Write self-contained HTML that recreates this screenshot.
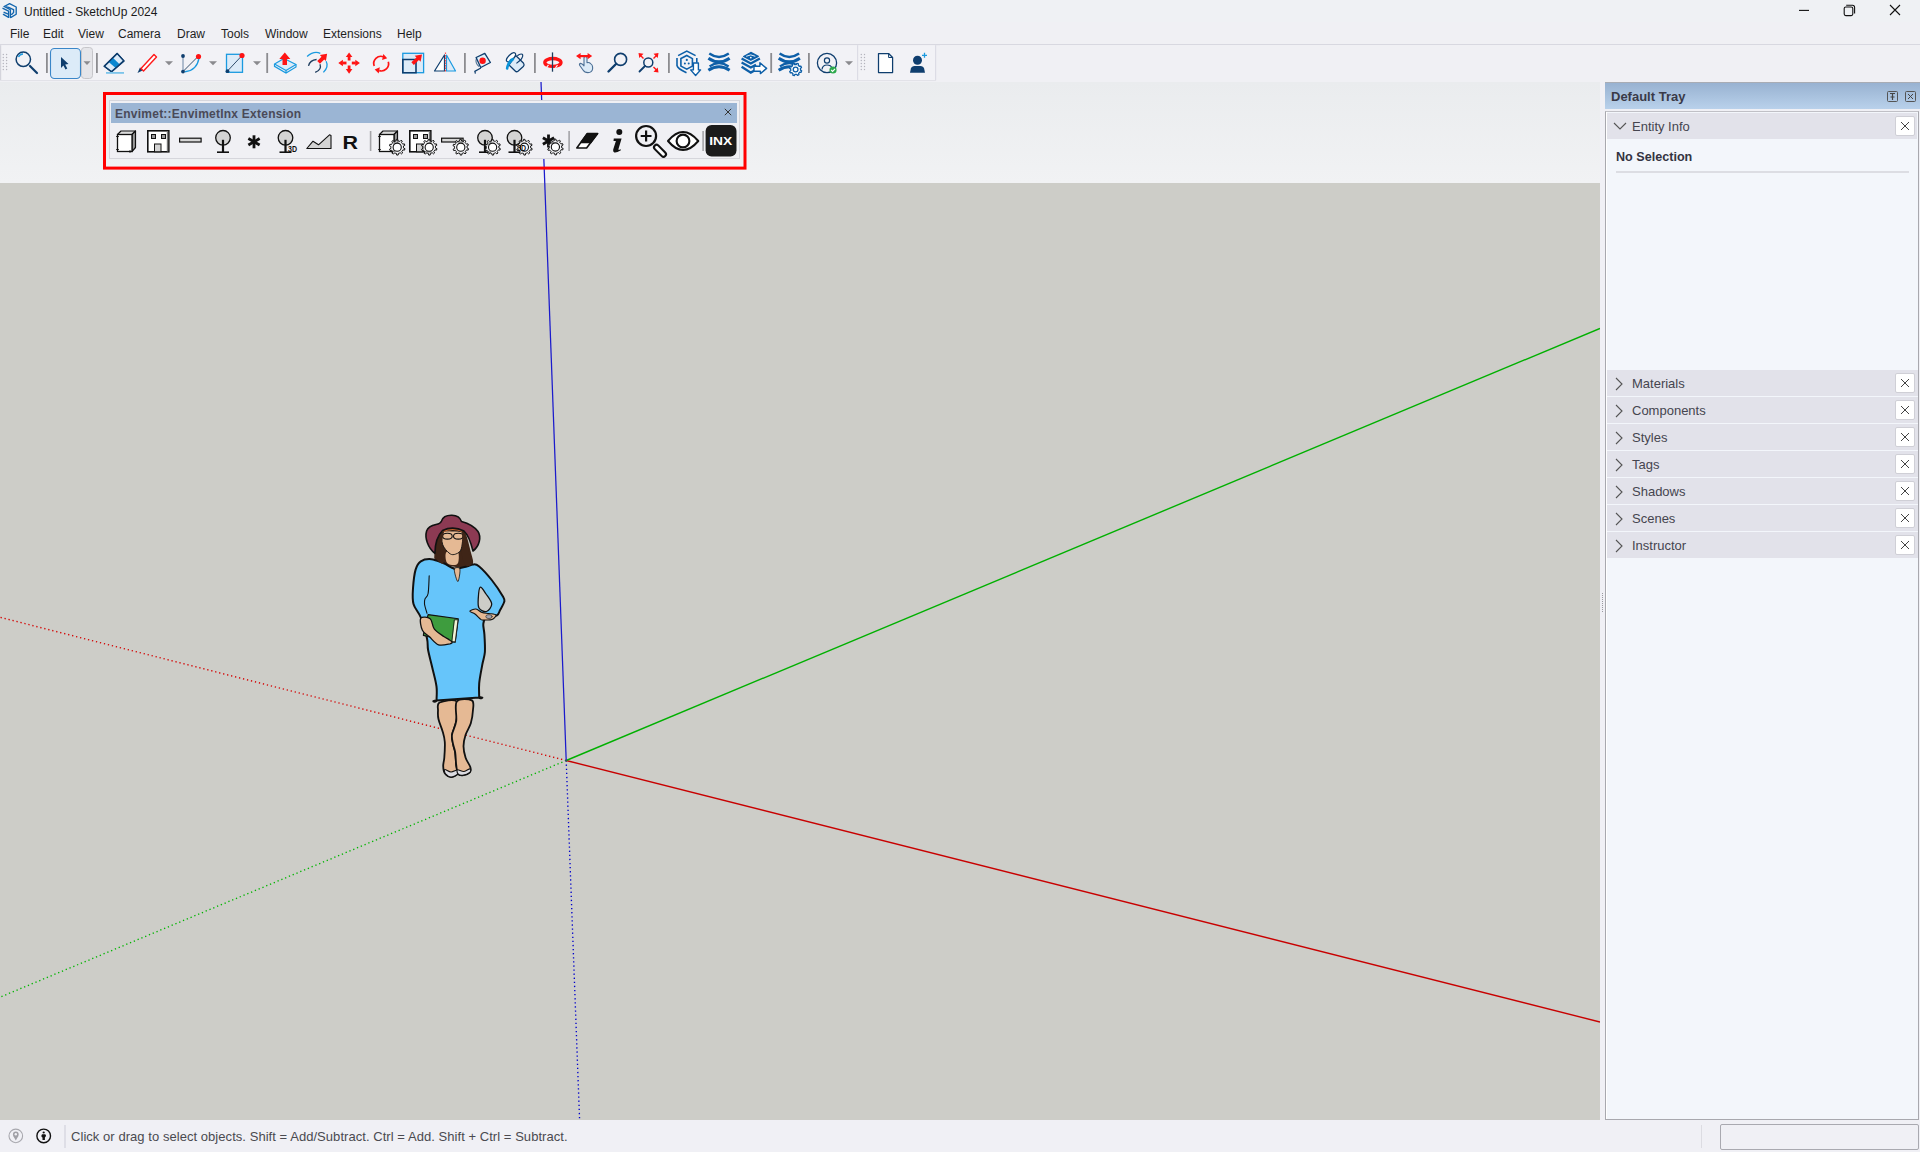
<!DOCTYPE html>
<html><head><meta charset="utf-8">
<style>
*{margin:0;padding:0;box-sizing:border-box}
html,body{width:1920px;height:1152px;overflow:hidden;background:#f0f0f5;font-family:"Liberation Sans",sans-serif}
.a{position:absolute}
#title{left:0;top:0;width:1920px;height:22px;background:#eff1f4}
#title .t{left:24px;top:5px;font-size:12px;color:#1a1a1a;letter-spacing:0px}
#menu{left:0;top:22px;width:1920px;height:23px;background:#f0f0f4;border-bottom:1px solid #d8d8e0}
#menu span{position:absolute;top:5px;font-size:12px;color:#1e1e1e}
#tb{left:0;top:45px;width:1920px;height:37px;background:#f0f0f4}
#vp{left:0;top:82px;width:1600px;height:1038px;background:#cdcdc8;overflow:hidden}
#sky{left:0;top:0;width:1600px;height:101px;background:linear-gradient(#ebedef,#f1f2f4)}
#tray{left:1600px;top:82px;width:320px;height:1038px;background:#f0f0f5}
#status{left:0;top:1120px;width:1920px;height:32px;background:#f0f0f5}
.row{position:absolute;left:1607px;width:311px;height:26px;background:#e2e2ea}
.row .lbl{position:absolute;left:25px;top:6px;font-size:13px;color:#45454f}
.row .chev{position:absolute;left:8px;top:8px}
.xb{position:absolute;width:20px;height:20px;background:#fff;border:1px solid #cfcfd6;border-radius:2px}
</style></head><body>
<div id="title" class="a">
  <svg class="a" style="left:0;top:0" width="24" height="22" viewBox="0 0 24 22"><g fill="none" stroke="#1266ae" stroke-width="1.35" stroke-linejoin="round" stroke-linecap="round"><path d="M4.2 6.5 L9.6 3.6 L16.2 7 V14.2 L11 17.4"/><path d="M6.2 6.9 L8.7 7.4 L12.9 9.3 L13.6 9.7 V12.6 L11.6 14.4"/><path d="M4.2 6.5 L9.8 9.3 L10.4 10 V17.6"/><path d="M3 8.3 L8.6 11.2 V17.4 L3.4 14.4"/><path d="M4.1 12.3 L7.6 13.9"/></g></svg>
  <div class="a t">Untitled - SketchUp 2024</div>
  <svg class="a" style="left:1797px;top:4px" width="110" height="14"><path d="M2 6.4 H12" stroke="#111" stroke-width="1.1"/><rect x="47.2" y="3" width="8.6" height="8.6" rx="1.6" fill="none" stroke="#111" stroke-width="1.1"/><path d="M49.2 1.3 H55.5 Q57.6 1.3 57.6 3.4 V9.6" fill="none" stroke="#111" stroke-width="1.1"/><path d="M93 1 L103 11 M103 1 L93 11" stroke="#111" stroke-width="1.1"/></svg>
</div>
<div id="menu" class="a">
  <span style="left:10px">File</span><span style="left:43px">Edit</span><span style="left:78px">View</span><span style="left:118px">Camera</span><span style="left:177px">Draw</span><span style="left:221px">Tools</span><span style="left:265px">Window</span><span style="left:323px">Extensions</span><span style="left:397px">Help</span>
</div>
<div id="tb" class="a"></div>
<svg class="a" style="left:0;top:44px" width="940" height="38" viewBox="0 44 940 38">
<rect x="0" y="44" width="940" height="38" fill="#f0f0f4"/>
<rect x="0" y="44" width="940" height="1.2" fill="#d8d8e0"/>
<rect x="0" y="45.2" width="857" height="35" fill="#f2f2f6"/>
<rect x="0" y="45.2" width="1.2" height="35" fill="#d4d4dc"/>
<rect x="857" y="45.2" width="1.4" height="35" fill="#dcdce5"/>
<rect x="858.4" y="45.2" width="76.6" height="35" fill="#f2f2f6"/>
<rect x="935" y="45.2" width="1.2" height="35" fill="#dcdce5"/>
<rect x="0" y="80" width="936" height="1" fill="#e2e2e8"/>
<g fill="#b4b4bc">
<circle cx="3.3" cy="54.5" r=".7"/><circle cx="6.6" cy="54.5" r=".7"/><circle cx="3.3" cy="57.5" r=".7"/><circle cx="6.6" cy="57.5" r=".7"/><circle cx="3.3" cy="60.5" r=".7"/><circle cx="6.6" cy="60.5" r=".7"/><circle cx="3.3" cy="63.5" r=".7"/><circle cx="6.6" cy="63.5" r=".7"/><circle cx="3.3" cy="66.5" r=".7"/><circle cx="6.6" cy="66.5" r=".7"/><circle cx="3.3" cy="69.5" r=".7"/><circle cx="6.6" cy="69.5" r=".7"/>
<circle cx="861.3" cy="54.5" r=".7"/><circle cx="864.5" cy="54.5" r=".7"/><circle cx="861.3" cy="57.5" r=".7"/><circle cx="864.5" cy="57.5" r=".7"/><circle cx="861.3" cy="60.5" r=".7"/><circle cx="864.5" cy="60.5" r=".7"/><circle cx="861.3" cy="63.5" r=".7"/><circle cx="864.5" cy="63.5" r=".7"/><circle cx="861.3" cy="66.5" r=".7"/><circle cx="864.5" cy="66.5" r=".7"/><circle cx="861.3" cy="69.5" r=".7"/><circle cx="864.5" cy="69.5" r=".7"/>
</g>
<g fill="#8c8c90">
<rect x="46" y="53" width="1.8" height="20"/><rect x="96" y="53" width="1.8" height="20"/><rect x="266.3" y="53" width="1.8" height="20"/><rect x="464" y="53" width="1.8" height="20"/><rect x="534" y="53" width="1.8" height="20"/><rect x="668" y="53" width="1.8" height="20"/><rect x="770.3" y="53" width="1.8" height="20"/><rect x="808" y="53" width="1.8" height="20"/>
</g>
<!-- search -->
<circle cx="23.3" cy="59.3" r="7.2" fill="none" stroke="#0f3e6e" stroke-width="1.5"/>
<path d="M18.5 57 A5 5 0 0 1 23 54" fill="none" stroke="#1a9ae0" stroke-width="1.3"/>
<path d="M30 66 L37 73" stroke="#0f3e6e" stroke-width="2.2" stroke-linecap="round"/>
<!-- select -->
<rect x="50.5" y="48.5" width="30" height="30" rx="4" fill="#dcebf8" stroke="#3a86c8" stroke-width="1.1"/>
<path d="M61 57 L68.5 64 L65.2 64.6 L67.3 68.6 L65.5 69.5 L63.4 65.5 L61 68 Z" fill="#0f3e6e"/>
<rect x="81.5" y="47.5" width="11" height="31" rx="3" fill="#e5e5e9" stroke="#c6c6ca" stroke-width="1"/>
<path d="M83.5 61.2 H90.5 L87 65 Z" fill="#8a8a8e"/>
<!-- eraser -->
<path d="M117.1 53.4 L123.9 60.9 L111.5 71.7 L104.25 66.3 Z" fill="#dcebf8" stroke="#0f3e6e" stroke-width="1.4" stroke-linejoin="round"/>
<path d="M108.66 61.9 L112.87 57.64 L119.81 64.44 L115.69 68 Z" fill="#0a87d0"/>
<path d="M104.25 66.3 L117.1 53.4 L123.9 60.9 L111.5 71.7 Z" fill="none" stroke="#0f3e6e" stroke-width="1.4" stroke-linejoin="round"/>
<rect x="106" y="72" width="18" height="1.8" fill="#7cc4ea"/>
<!-- pencil -->
<path d="M137.5 73 L140 67.5 L143 70.3 Z" fill="#0f3e6e"/>
<path d="M141 68.5 L154 54.5 L156.5 57 L143.5 71 Z" fill="#fff" stroke="#ff1a1a" stroke-width="1.4" stroke-linejoin="round"/>
<path d="M165 61.2 H173 L169 65.2 Z M209 61.2 H217 L213 65.2 Z M253 61.2 H261 L257 65.2 Z M845 61.2 H853 L849 65.2 Z" fill="#8a8a8e"/>
<!-- arc -->
<path d="M183 56 V71.5" stroke="#6d86a4" stroke-width="1"/>
<path d="M183.5 71 L198 56.5" stroke="#1e3d5e" stroke-width="0.9"/>
<path d="M185 71.8 Q197 70.5 199 58" fill="none" stroke="#1a9ae0" stroke-width="1.4"/>
<circle cx="183" cy="56" r="1.9" fill="#0f3e6e"/><circle cx="183" cy="71.6" r="1.9" fill="#0f3e6e"/>
<circle cx="198.5" cy="56.5" r="2.6" fill="#ff1414"/>
<!-- rect -->
<rect x="226.5" y="54.3" width="16" height="18" fill="#dcebf8" stroke="#1a9ae0" stroke-width="1.3"/>
<path d="M227.5 71 L242 55.5" stroke="#1e3d5e" stroke-width="0.9"/>
<circle cx="227.5" cy="71.2" r="1.9" fill="#0f3e6e"/><circle cx="242" cy="55.5" r="2.6" fill="#ff1414"/>
<!-- push pull -->
<path d="M274.5 64 L284 58.5 L296 64.5 L286 70.5 Z" fill="#dcebf8" stroke="#1a9ae0" stroke-width="1.2" stroke-linejoin="round"/>
<path d="M274.5 64 V66.3 L286 73 L296 67 V64.5 M286 70.5 V73" fill="none" stroke="#1a9ae0" stroke-width="1.2"/>
<path d="M282.5 65 V59 H279.3 L284.8 52.5 L290.3 59 H287 V65 Z" fill="#ff1414"/>
<!-- follow me -->
<path d="M307.1 56.5 Q314 50.5 320.3 53.4" fill="none" stroke="#1a9ae0" stroke-width="1.3"/>
<path d="M326.1 61.2 Q329 66.5 323.4 72.4" fill="none" stroke="#1a9ae0" stroke-width="1.3"/>
<path d="M308.5 65.9 Q310 60 316.6 59.5" fill="none" stroke="#1e3d5e" stroke-width="1.3"/>
<path d="M320 64.2 Q322 69.5 315.2 72.4" fill="none" stroke="#1e3d5e" stroke-width="1.3"/>
<path d="M319.95 63.74 L324.23 59.40 L325.90 61.05 L327.10 53.80 L319.86 55.08 L321.53 56.73 L317.25 61.06Z" fill="#ff1414"/>
<!-- move -->
<g fill="#ff1414">
<path d="M349.1 52.4 L345.8 57 H352.4 Z M349.1 73.7 L345.8 69.1 H352.4 Z M338.3 63 L342.9 59.7 V66.3 Z M359.9 63 L355.3 59.7 V66.3 Z"/>
<rect x="347.7" y="56.5" width="2.8" height="4"/><rect x="347.7" y="65.5" width="2.8" height="4"/><rect x="342.5" y="61.6" width="4" height="2.8"/><rect x="351.8" y="61.6" width="4" height="2.8"/>
</g>
<!-- rotate -->
<path d="M374.2 66 A7.2 7.2 0 0 1 383.5 56.8" fill="none" stroke="#ff1414" stroke-width="1.7"/>
<path d="M388.3 61.8 A7.2 7.2 0 0 1 379.2 70.6" fill="none" stroke="#ff1414" stroke-width="1.7"/>
<path d="M383.3 53.9 L387.2 58.3 L382.1 60.1 Z M379.8 67.3 L374.7 69.6 L378.7 73.6 Z" fill="#ff1414"/>
<!-- scale -->
<rect x="402.8" y="53.3" width="20.8" height="19.4" fill="#dcebf8" stroke="#1a9ae0" stroke-width="1.3"/>
<path d="M402.8 59.5 H416 V72.7 H402.8 Z" fill="none" stroke="#0f3e6e" stroke-width="1.6"/>
<path d="M413.84 64.90 L418.91 60.05 L420.61 61.82 L422.00 54.60 L414.73 55.68 L416.42 57.45 L411.36 62.30Z" fill="#ff1414"/>
<!-- mirror -->
<path d="M434.5 71 L444.5 55 V71 Z" fill="#fff" stroke="#0f3e6e" stroke-width="1.2" stroke-linejoin="round"/>
<path d="M446.5 55 L455.5 71 H446.5 Z" fill="#dcebf8" stroke="#1a9ae0" stroke-width="1.2" stroke-linejoin="round"/>
<path d="M445.5 52.5 V72" stroke="#ff5050" stroke-width="1.2" stroke-dasharray="1.5 1"/>
<!-- tape -->
<path d="M476.1 57.5 L484.8 53.4 L490.4 62.5 L480.75 67.5 Z" fill="#e0f2fb" stroke="#0f3e6e" stroke-width="1.35" stroke-linejoin="round"/>
<path d="M476.3 59 Q475 63 479 66.5" fill="none" stroke="#0f3e6e" stroke-width="1.1" opacity=".7"/>
<circle cx="482.6" cy="60.8" r="3.2" fill="#ff1414"/>
<path d="M480.9 68 L474.3 71.6 M475 72 L475.4 73.6" stroke="#0f3e6e" stroke-width="1.2"/>
<!-- bucket -->
<path d="M515.75 55.5 L523.6 63.3 Q524.8 64.8 523.3 66.5 L518 71.2 Q516.5 72.4 515.2 71 L509 65 Z" fill="#dcebf8" stroke="#0f3e6e" stroke-width="1.25" stroke-linejoin="round"/>
<ellipse cx="511" cy="57.3" rx="5.8" ry="2.6" transform="rotate(-45 511 57.3)" fill="#fff" stroke="#0f3e6e" stroke-width="1.2"/>
<path d="M513.2 57.6 Q507.2 59.5 505.8 68.5 Q506.5 70.6 508.3 69.3 Q509 63.5 514.3 59.8 Z" fill="#0a93d8"/>
<path d="M516.4 63.4 L520.8 59.8 Q523.8 55.5 522.2 54.2 Q520 53.4 517.3 55.8" fill="none" stroke="#0f3e6e" stroke-width="1.2"/>
<!-- orbit -->
<ellipse cx="552.9" cy="62.4" rx="8.1" ry="3.9" fill="none" stroke="#ff1414" stroke-width="3.3"/>
<path d="M548.5 64.8 L546.5 67.5 M557.5 65 L555.5 67.8" stroke="#f2f2f6" stroke-width="1.2"/>
<path d="M552.5 52.4 V71.7" stroke="#1e3d5e" stroke-width="1.3"/>
<!-- pan -->
<path d="M584 57.5 Q585.5 55.5 587 57.5 V62.6 Q589.3 62 590.6 63.6 Q592.6 64.8 592.6 67 V69 Q592 72.6 588 72.6 Q584.5 72.6 583 70 L579.6 65.2 Q579 63.6 580.6 63.4 Q582 63.4 584 65.8 Z" fill="#dcebf8" stroke="#4c6f95" stroke-width="1.1" stroke-linejoin="round"/>
<path d="M576 56.1 L580.6 52.9 V59.3 Z M592.2 56.1 L587.6 52.9 V59.3 Z" fill="#ff1414"/>
<path d="M579 56.1 H589.5" stroke="#ff1414" stroke-width="2.2"/>
<!-- zoom -->
<circle cx="620.6" cy="59.4" r="6" fill="none" stroke="#0f3e6e" stroke-width="1.6"/>
<path d="M616 64 L608.5 71.5" stroke="#0f3e6e" stroke-width="2.4" stroke-linecap="round"/>
<!-- zoom extents -->
<circle cx="648.3" cy="62.5" r="4.5" fill="none" stroke="#0f3e6e" stroke-width="1.5"/>
<path d="M645 66 L639.5 71.5" stroke="#0f3e6e" stroke-width="1.8" stroke-linecap="round"/>
<g fill="#ff1414"><path d="M638.5 53 L643.5 53.8 L639.3 58 Z M658.5 53 L653.5 53.8 L657.7 58 Z M658.5 72.5 L653.5 71.7 L657.7 67.5 Z"/>
<path d="M640.5 55.5 L643.5 58.5 M656.5 55.5 L653.5 58.5 M656.5 70 L653.5 67" stroke="#ff1414" stroke-width="1.4"/></g>
<!-- warehouse -->
<g fill="none" stroke="#0d5fa8" stroke-width="1.6">
<path d="M678.1 55.6 L686.8 51.1 L695.6 55.6"/>
<path d="M677 58 V65.5 Q677.5 68.5 686.5 72.8"/>
<path d="M696.8 58 V62.8"/>
<path d="M686.8 55.5 L692.4 58.6 V66.1 L686.8 69.2 L680.9 66.1 V58.6 Z"/>
</g>
<circle cx="686.8" cy="59.9" r="1.1" fill="#0d5fa8"/><circle cx="684.9" cy="63.5" r="1" fill="#0d5fa8"/><circle cx="688.7" cy="63.5" r="1" fill="#0d5fa8"/>
<path d="M693.4 63 H698.4 V69.9 H700.6 L695.6 75.5 L690.6 69.9 H693.4 Z" fill="#fff" stroke="#0d5fa8" stroke-width="1.4" stroke-linejoin="round"/>
<!-- ext warehouse X -->
<g fill="none" stroke="#0d5fa8" stroke-linecap="butt">
<path d="M709.3 53.6 Q719 60.5 728.8 53.6" stroke-width="2.4"/>
<path d="M708.4 58.2 Q719 65.5 729.6 58.2" stroke-width="3"/>
<path d="M709.6 66.4 Q719 59.6 728.6 66.4" stroke-width="2.4"/>
<path d="M708.4 70.2 Q719 63.2 729.6 70.2" stroke-width="3"/>
</g>
<!-- layout -->
<path d="M743.6 56.4 L750.8 52.4 L758.3 56.4 L750.8 60.2 Z" fill="#0d5fa8" stroke="#0d5fa8" stroke-width="1.2" stroke-linejoin="round"/>
<path d="M746.2 56.3 Q750.8 53.5 755.3 56.3" fill="none" stroke="#fff" stroke-width=".9"/>
<circle cx="750.8" cy="57.6" r=".9" fill="#fff"/>
<g fill="none" stroke="#0d5fa8" stroke-width="2.3">
<path d="M741.6 58.6 L750.8 63.5 L759.9 58.6"/>
<path d="M741.6 62.6 L750.8 67.5 L756 64.7"/>
<path d="M741.6 66.8 L750.8 72.6 L754.5 70.5"/>
</g>
<path d="M754 66.2 H759.9 V62.8 L766.6 68.4 L760.4 73.6 V71.2 H754 Z" fill="#fff" stroke="#0d5fa8" stroke-width="1.4" stroke-linejoin="round"/>
<!-- ext manager -->
<g fill="none" stroke="#0d5fa8" stroke-linecap="butt">
<path d="M779.5999999999999 53.6 Q789.3 60.5 799.0999999999999 53.6" stroke-width="2.4"/>
<path d="M778.6999999999999 58.2 Q789.3 65.5 799.9 58.2" stroke-width="3"/>
<path d="M779.9 66.4 Q789.3 59.6 798.9 66.4" stroke-width="2.4"/>
<path d="M778.6999999999999 70.2 Q789.3 63.2 799.9 70.2" stroke-width="3"/>
</g>
<path d="M800.50 69.50 L800.47 70.08 L801.66 70.80 L801.12 72.31 L799.74 72.13 L799.06 72.96 L799.06 72.96 L798.63 73.35 L798.96 74.71 L797.52 75.40 L796.67 74.28 L795.60 74.40 L795.60 74.40 L795.02 74.37 L794.30 75.56 L792.79 75.02 L792.97 73.64 L792.14 72.96 L792.14 72.96 L791.75 72.53 L790.39 72.86 L789.70 71.42 L790.82 70.57 L790.70 69.50 L790.70 69.50 L790.73 68.92 L789.54 68.20 L790.08 66.69 L791.46 66.87 L792.14 66.04 L792.14 66.04 L792.57 65.65 L792.24 64.29 L793.68 63.60 L794.53 64.72 L795.60 64.60 L795.60 64.60 L796.18 64.63 L796.90 63.44 L798.41 63.98 L798.23 65.36 L799.06 66.04 L799.06 66.04 L799.45 66.47 L800.81 66.14 L801.50 67.58 L800.38 68.43 L800.50 69.50Z" fill="#fff" stroke="#0d5fa8" stroke-width="1.3" stroke-linejoin="round"/><circle cx="795.6" cy="69.5" r="2.4" fill="none" stroke="#0d5fa8" stroke-width="1.3"/>
<!-- profile -->
<circle cx="827" cy="63" r="9.6" fill="none" stroke="#0f3e6e" stroke-width="1.3"/>
<circle cx="827" cy="60.5" r="2.6" fill="none" stroke="#0f3e6e" stroke-width="1.2"/>
<path d="M822 69.5 Q822.5 65 827 65 Q831 65 832 68" fill="none" stroke="#0f3e6e" stroke-width="1.2"/>
<circle cx="833" cy="70" r="3.6" fill="#2da94c"/>
<path d="M831.2 70 L832.6 71.4 L835 68.8" fill="none" stroke="#fff" stroke-width="1.1"/>
<!-- doc -->
<path d="M878.5 53.5 H888.6 L892.6 57.5 V72.6 H878.5 Z" fill="#fff" stroke="#0f3e6e" stroke-width="1.25" stroke-linejoin="round"/>
<path d="M888.6 53.8 V57.5 H892.3" fill="none" stroke="#0f3e6e" stroke-width="1"/>
<!-- person -->
<circle cx="917.5" cy="60.3" r="4.5" fill="#0f3e6e"/>
<path d="M910 72.8 L910.9 68.6 Q911.6 66 914.6 66 H920.4 Q923.4 66 924.1 68.6 L925 72.8 Z" fill="#0f3e6e"/>
<path d="M924.5 52.8 V57.8 M922 55.3 H927" stroke="#1a9ae0" stroke-width="1.3"/>
</svg>

<div id="vp" class="a">
<svg class="a" style="left:0;top:0" width="1600" height="1038" viewBox="0 82 1600 1038">
<defs><linearGradient id="sk" x1="0" y1="0" x2="0" y2="1"><stop offset="0" stop-color="#eaecee"/><stop offset="1" stop-color="#f1f2f4"/></linearGradient></defs>
<rect x="0" y="82" width="1600" height="101" fill="url(#sk)"/>
<path d="M566.2 760.5 L0 617.3" stroke="#d40000" stroke-width="1.35" stroke-dasharray="1.3 2.8"/>
<path d="M566.2 760.5 L0 997.2" stroke="#00b400" stroke-width="1.35" stroke-dasharray="1.3 2.8"/>
<path d="M566.2 760.5 L579.6 1120" stroke="#0000cc" stroke-width="1.35" stroke-dasharray="1.3 2.8"/>
<path d="M566.2 760.5 L1600 1022" stroke="#c80000" stroke-width="1.4"/>
<path d="M566.2 760.5 L1600 328.4" stroke="#00b000" stroke-width="1.4"/>
<path d="M566.2 760.5 L541 82" stroke="#1a1acc" stroke-width="1.25"/>
<g id="woman" stroke-linejoin="round" stroke-linecap="round">
<path d="M443.7 530.0 C439.3 531.5 437.6 535.0 436.0 539.0 C434.4 543.0 434.5 550.5 434.4 554.0 C434.3 557.5 433.8 558.3 435.4 560.0 C436.9 561.7 440.3 562.8 443.7 564.0 C447.1 565.2 452.2 566.6 456.0 567.0 C459.8 567.4 463.9 567.1 466.7 566.5 C469.5 565.9 472.3 565.7 473.0 563.3 C473.7 560.9 471.9 556.5 470.8 552.0 C469.7 547.5 467.9 539.7 466.5 536.0 C465.1 532.3 466.3 531.0 462.5 530.0 C458.7 529.0 448.1 528.5 443.7 530.0Z" fill="#3f2517" stroke="none" stroke-width="0" />
<path d="M446.5 552.0 C448.3 550.2 455.6 549.2 457.5 551.0 C459.4 552.8 458.9 560.7 458.0 563.0 C457.1 565.3 453.9 565.2 452.0 565.0 C450.1 564.8 447.4 564.2 446.5 562.0 C445.6 559.8 444.7 553.8 446.5 552.0Z" fill="#e5b994" stroke="none" stroke-width="0" />
<path d="M420.8 561.3 C423.4 559.6 427.5 558.9 431.3 559.2 C435.1 559.5 439.9 561.8 443.7 563.3 C447.5 564.8 450.4 568.0 454.2 568.5 C458.0 569.0 463.6 567.2 466.7 566.5 C469.8 565.8 470.9 564.4 473.0 564.4 C475.1 564.4 476.1 563.9 479.2 566.5 C482.3 569.1 487.7 575.0 491.7 580.0 C495.7 585.0 501.0 593.1 503.1 596.7 C505.2 600.4 504.7 599.6 504.2 601.9 C503.7 604.1 501.2 608.0 500.0 610.2 C498.8 612.5 499.2 614.1 496.9 615.4 C494.6 616.7 488.3 616.6 486.0 618.0 C483.7 619.4 483.6 621.3 483.3 624.0 C483.0 626.7 484.1 629.7 484.4 634.4 C484.7 639.1 485.2 647.0 484.9 652.0 C484.5 657.0 483.2 659.4 482.3 664.6 C481.4 669.8 479.7 677.8 479.2 683.3 C478.7 688.8 479.2 695.0 479.2 697.4 C479.2 699.8 486.3 696.9 479.2 697.4 C472.1 697.9 443.6 700.0 436.5 700.5 C429.4 701.0 436.5 702.8 436.5 700.5 C436.5 698.2 437.2 692.0 436.5 686.5 C435.8 681.0 433.7 673.8 432.3 667.7 C430.9 661.6 429.0 654.9 428.1 650.0 C427.2 645.1 428.2 643.9 427.0 638.5 C425.8 633.1 423.1 623.2 420.8 617.5 C418.6 611.8 414.8 608.9 413.5 604.0 C412.2 599.1 412.6 594.0 413.0 588.3 C413.4 582.6 414.3 574.1 415.6 569.6 C416.9 565.1 418.2 563.0 420.8 561.3Z" fill="#66c5fa" stroke="#111" stroke-width="2.0" />
<path d="M454.2 569.2 C453.9 571.3 456.9 581.6 457.8 581.6 C458.8 581.6 460.5 571.1 459.9 569.0 C459.3 566.9 454.5 567.1 454.2 569.2Z" fill="#e5b994" stroke="#111" stroke-width="0.8" />
<path d="M480.2 587.3 C481.5 586.6 484.1 591.2 486.0 594.0 C487.9 596.8 491.6 601.1 491.7 604.0 C491.8 606.9 488.6 610.8 486.5 611.5 C484.4 612.2 480.4 610.2 479.0 608.0 C477.6 605.8 478.1 601.5 478.3 598.0 C478.5 594.5 478.9 588.0 480.2 587.3Z" fill="#cdcdc8" stroke="#111" stroke-width="1.3" />
<path d="M429.2 575.8 C429.0 578.8 428.8 589.7 428.1 593.5 C427.4 597.3 425.6 597.0 425.0 598.8 C424.4 600.5 424.2 601.6 424.5 604.0 C424.8 606.4 426.6 611.8 427.0 613.3" fill="none" stroke="#111" stroke-width="1.1" />
<path d="M442.7 532.5 C444.2 530.2 448.7 531.0 452.0 531.0 C455.3 531.0 460.8 530.8 462.5 532.5 C464.2 534.2 462.9 538.5 462.5 541.5 C462.1 544.5 461.8 548.6 460.4 550.8 C459.0 553.0 456.1 554.1 454.2 554.5 C452.3 554.9 450.9 554.6 449.0 553.0 C447.1 551.4 443.8 548.0 442.7 544.6 C441.6 541.2 441.1 534.8 442.7 532.5Z" fill="#e5b994" stroke="#111" stroke-width="0.9" />
<path d="M443 531.5 Q452 527.5 462 531" fill="none" stroke="#c2612a" stroke-width="1.4"/>
<ellipse cx="447.4" cy="536.2" rx="4.8" ry="2.9" fill="none" stroke="#111" stroke-width="1.1"/><ellipse cx="458.3" cy="536.2" rx="4.8" ry="2.9" fill="none" stroke="#111" stroke-width="1.1"/>
<path d="M443.7 531.0 C443.0 530.8 439.2 536.3 438.0 540.0 C436.8 543.7 436.7 549.7 436.5 553.0 C436.3 556.3 435.8 558.2 437.0 560.0 C438.2 561.8 443.2 564.7 443.7 563.5 C444.2 562.3 440.3 556.8 440.0 553.0 C439.7 549.2 441.4 544.7 442.0 541.0 C442.6 537.3 444.4 531.2 443.7 531.0Z" fill="#3f2517" stroke="none" stroke-width="0" />
<path d="M462.5 531.0 C463.1 530.7 464.8 536.3 466.0 540.0 C467.2 543.7 468.4 549.2 469.5 553.0 C470.6 556.8 473.0 560.8 472.5 563.0 C472.0 565.2 468.2 567.2 466.5 566.0 C464.8 564.8 462.7 560.0 462.0 556.0 C461.3 552.0 462.4 546.2 462.5 542.0 C462.6 537.8 461.9 531.3 462.5 531.0Z" fill="#3f2517" stroke="none" stroke-width="0" />
<path d="M434.9 553.4 C428 548 424.5 538 426.6 531 C428 527 431 525.5 436 524.5 C439 524 440.5 523.5 441.5 521 C443 516.5 447 515 452 515.2 C457 515.4 460 517 461.5 521.5 C467 523 474 526 478 531.5 C481.5 537 479.5 546 473 551 C471 543 468.5 535 464 531 C457 527.5 449 527.5 442.5 530.5 C438 535 435 543 434.9 553.4 Z" fill="#8c3a53" stroke="#111" stroke-width="1.6"/>
<path d="M428.1 614.6 L458.3 618.75 L455.2 642.2 L450 641.7 L423.4 635.4 L424 631.25 Z" fill="#3e9c3e" stroke="#111" stroke-width="1.2"/>
<path d="M454.7 619.8 L458 619.8 L455.2 641.8 L452.2 641.7 Z" fill="#f3f3d6" stroke="#111" stroke-width=".8"/>
<path d="M420.8 618.2 C422.1 616.3 427.9 616.9 430.2 618.8 C432.5 620.6 432.1 626.2 434.4 629.2 C436.7 632.2 441.3 634.8 443.8 636.5 C446.2 638.2 447.6 638.7 449.0 639.6 C450.4 640.5 451.8 641.3 452.0 642.0 C452.2 642.7 452.2 643.3 450.0 643.8 C447.8 644.2 442.0 646.0 438.5 644.8 C435.0 643.6 431.9 638.9 429.2 636.5 C426.5 634.1 423.8 633.2 422.4 630.2 C421.0 627.2 419.5 620.1 420.8 618.2Z" fill="#e5b994" stroke="#111" stroke-width="1.3" />
<path d="M469.8 611.2 C470.0 610.4 474.0 608.8 476.0 609.0 C478.0 609.2 479.8 611.8 482.0 612.5 C484.2 613.2 486.7 613.1 489.0 613.5 C491.3 613.9 495.5 614.0 496.0 615.0 C496.5 616.0 493.8 618.7 492.0 619.5 C490.2 620.3 486.8 620.0 485.0 620.0 C483.2 620.0 482.9 620.6 481.2 619.6 C479.6 618.6 476.9 615.4 475.0 614.0 C473.1 612.6 469.6 612.1 469.8 611.2Z" fill="#e5b994" stroke="#111" stroke-width="1.1" />
<ellipse cx="489" cy="616.6" rx="3.2" ry="2" fill="#a4a4ae" stroke="#333" stroke-width=".7"/>
<path d="M439.6 702.5 C436.5 704.0 438.2 708.0 438.0 710.8 C437.8 713.6 437.7 715.7 438.5 719.2 C439.3 722.7 441.6 727.9 442.7 731.7 C443.8 735.5 444.5 737.7 444.8 742.0 C445.1 746.3 444.6 753.7 444.3 757.7 C444.0 761.7 443.1 763.4 443.2 766.0 C443.3 768.6 443.5 771.5 444.8 773.3 C446.1 775.1 448.8 777.0 451.0 777.0 C453.2 777.0 456.9 775.3 457.8 773.3 C458.7 771.3 456.7 768.5 456.2 765.0 C455.8 761.5 455.7 756.0 455.2 752.5 C454.7 749.0 453.6 747.2 453.1 744.2 C452.6 741.2 451.5 738.6 452.0 734.8 C452.5 731.0 455.4 726.8 456.2 721.2 C457.1 715.7 459.6 704.6 456.8 701.5 C454.0 698.4 442.7 701.0 439.6 702.5Z" fill="#e5b994" stroke="#111" stroke-width="1.8" />
<path d="M456.8 701.5 C459.4 698.0 469.2 698.9 471.9 700.4 C474.6 701.9 473.1 707.0 472.9 710.8 C472.7 714.6 472.0 719.3 470.8 723.3 C469.6 727.3 466.8 731.0 465.6 734.8 C464.4 738.6 463.5 742.4 463.5 746.2 C463.5 750.1 464.5 754.2 465.6 757.7 C466.7 761.2 469.6 764.6 470.3 767.0 C471.0 769.4 471.1 770.9 469.8 772.3 C468.5 773.7 464.5 775.2 462.5 775.4 C460.5 775.6 458.8 775.0 457.8 773.3 C456.8 771.6 456.7 768.5 456.2 765.0 C455.8 761.5 455.7 756.0 455.2 752.5 C454.7 749.0 453.6 747.2 453.1 744.2 C452.6 741.2 451.5 738.6 452.0 734.8 C452.5 731.0 455.4 726.8 456.2 721.2 C457.1 715.7 454.2 705.0 456.8 701.5Z" fill="#e5b994" stroke="#111" stroke-width="1.8" />
<path d="M444.8 769.5 C445.7 769.2 448.9 771.9 451.0 772.0 C453.1 772.1 456.4 769.7 457.5 770.0 C458.6 770.3 458.9 772.8 457.8 774.0 C456.7 775.2 453.1 777.0 451.0 777.0 C448.9 777.0 446.5 775.2 445.5 774.0 C444.5 772.8 443.9 769.8 444.8 769.5Z" fill="#dcdce2" stroke="#111" stroke-width="1.2" />
<path d="M457.5 769.8 C458.5 769.4 461.9 771.7 464.0 771.5 C466.1 771.3 469.0 768.6 470.0 768.8 C471.0 769.0 471.1 771.4 469.8 772.5 C468.6 773.6 464.5 775.1 462.5 775.4 C460.5 775.6 458.8 774.9 458.0 774.0 C457.2 773.1 456.5 770.2 457.5 769.8Z" fill="#dcdce2" stroke="#111" stroke-width="1.2" />
</g>
</svg>

</div>
<svg class="a" style="left:0;top:80px" width="760" height="100" viewBox="0 80 760 100">
<rect x="109.5" y="100.5" width="630" height="58" fill="#f0f0f4" stroke="#d6d6dc" stroke-width="1"/>
<rect x="111" y="103" width="626" height="20" fill="#9bb5d4"/>
<text x="115" y="117.8" font-family="Liberation Sans" font-weight="bold" font-size="12" letter-spacing=".24" fill="#4a4a58">Envimet::EnvimetInx Extension</text>
<path d="M724.8 108.8 L731.2 115.2 M731.2 108.8 L724.8 115.2" stroke="#333" stroke-width="1"/>
<path d="M117.5 134.5 L121 131.0 H135.5 L132 134.5 Z" fill="#dcdcdc" stroke="#111" stroke-width="1.2" stroke-linejoin="round"/>
<path d="M132 134.5 L135.5 131.0 V147.5 L132 151.5 Z" fill="#9a9a9a" stroke="#111" stroke-width="1.2" stroke-linejoin="round"/>
<rect x="117.5" y="134.5" width="14.5" height="17" fill="#fff" stroke="#111" stroke-width="1.3"/>
<path d="M116 137.0 L117.5 135.5 L119 137.0 M116 149.0 L117.5 150.5 L119 149.0 M129.5 150.0 L131 151.5 L129.5 153.0" fill="none" stroke="#111" stroke-width=".8"/>
<rect x="147.8" y="130.8" width="21" height="21" fill="#fff" stroke="#111" stroke-width="1.6"/>
<rect x="166.8" y="131.5" width="1.5" height="20" fill="#777"/>
<rect x="151.5" y="134.5" width="4" height="4" fill="#999" stroke="#111" stroke-width="1"/>
<rect x="161.5" y="134.5" width="4" height="4" fill="#999" stroke="#111" stroke-width="1"/>
<rect x="154.5" y="144" width="6.5" height="7.8" fill="#d4d4d4" stroke="#111" stroke-width="1"/>
<rect x="179.6" y="138.2" width="21.5" height="3.8" fill="#d6d6d6" stroke="#111" stroke-width="1.2"/>
<circle cx="223" cy="137.8" r="7.3" fill="#d4d4d4" stroke="#111" stroke-width="1.3"/>
<rect x="221.9" y="139.8" width="2.2" height="12.5" fill="#111"/>
<rect x="217" y="151.4" width="12" height="1.6" fill="#111"/>
<path d="M254.00 135.30 L254.00 148.30" stroke="#111" stroke-width="2.8"/><path d="M248.37 138.55 L259.63 145.05" stroke="#111" stroke-width="2.8"/><path d="M259.63 138.55 L248.37 145.05" stroke="#111" stroke-width="2.8"/>
<circle cx="285.5" cy="137.8" r="7.3" fill="#d4d4d4" stroke="#111" stroke-width="1.3"/>
<rect x="284.4" y="139.8" width="2.2" height="12.5" fill="#111"/>
<rect x="279.5" y="151.4" width="12" height="1.6" fill="#111"/><text x="288.0" y="151.60000000000002" font-family="Liberation Sans" font-weight="bold" font-size="8.6" textLength="9" lengthAdjust="spacingAndGlyphs" fill="#111">3D</text>
<path d="M306.8 148.5 L313 141.2 L318.5 144.8 L329.5 134.8 L331 135.5 V148.5 Z" fill="#d4d4d4" stroke="#111" stroke-width="1.1" stroke-linejoin="round"/>
<text x="342.5" y="148.6" font-family="Liberation Sans" font-weight="bold" font-size="19" textLength="15.5" lengthAdjust="spacingAndGlyphs" fill="#111">R</text>
<rect x="369.8" y="131" width="1.6" height="20" fill="#a4a4a8"/>
<path d="M379.5 134.5 L383 131.0 H397.5 L394 134.5 Z" fill="#dcdcdc" stroke="#111" stroke-width="1.2" stroke-linejoin="round"/>
<path d="M394 134.5 L397.5 131.0 V147.5 L394 151.5 Z" fill="#9a9a9a" stroke="#111" stroke-width="1.2" stroke-linejoin="round"/>
<rect x="379.5" y="134.5" width="14.5" height="17" fill="#fff" stroke="#111" stroke-width="1.3"/>
<path d="M378 137.0 L379.5 135.5 L381 137.0 M378 149.0 L379.5 150.5 L381 149.0 M391.5 150.0 L393 151.5 L391.5 153.0" fill="none" stroke="#111" stroke-width=".8"/>
<path d="M403.50 147.20 L403.45 147.99 L404.96 148.68 L404.55 150.11 L402.90 149.88 L402.30 150.90 L402.30 150.90 L401.79 151.51 L402.61 152.96 L401.43 153.87 L400.24 152.72 L399.15 153.19 L399.15 153.19 L398.38 153.39 L398.19 155.04 L396.70 155.08 L396.41 153.45 L395.25 153.19 L395.25 153.19 L394.52 152.90 L393.39 154.12 L392.16 153.29 L392.89 151.79 L392.10 150.90 L392.10 150.90 L391.68 150.24 L390.05 150.56 L389.55 149.16 L391.01 148.38 L390.90 147.20 L390.90 147.20 L390.95 146.41 L389.44 145.72 L389.85 144.29 L391.50 144.52 L392.10 143.50 L392.10 143.50 L392.61 142.89 L391.79 141.44 L392.97 140.53 L394.16 141.68 L395.25 141.21 L395.25 141.21 L396.02 141.01 L396.21 139.36 L397.70 139.32 L397.99 140.95 L399.15 141.21 L399.15 141.21 L399.88 141.50 L401.01 140.28 L402.24 141.11 L401.51 142.61 L402.30 143.50 L402.30 143.50 L402.72 144.16 L404.35 143.84 L404.85 145.24 L403.39 146.02 L403.50 147.20Z" fill="#f4f4f6" fill-opacity=".55" stroke="#111" stroke-width="1"/><circle cx="397.2" cy="147.2" r="4.1" fill="#fff" stroke="#111" stroke-width="1.1"/>
<rect x="409.8" y="130.8" width="21" height="21" fill="#fff" stroke="#111" stroke-width="1.6"/>
<rect x="428.8" y="131.5" width="1.5" height="20" fill="#777"/>
<rect x="413.5" y="134.5" width="4" height="4" fill="#999" stroke="#111" stroke-width="1"/>
<rect x="423.5" y="134.5" width="4" height="4" fill="#999" stroke="#111" stroke-width="1"/>
<rect x="416.5" y="144" width="6.5" height="7.8" fill="#d4d4d4" stroke="#111" stroke-width="1"/>
<path d="M435.50 147.20 L435.45 147.99 L436.96 148.68 L436.55 150.11 L434.90 149.88 L434.30 150.90 L434.30 150.90 L433.79 151.51 L434.61 152.96 L433.43 153.87 L432.24 152.72 L431.15 153.19 L431.15 153.19 L430.38 153.39 L430.19 155.04 L428.70 155.08 L428.41 153.45 L427.25 153.19 L427.25 153.19 L426.52 152.90 L425.39 154.12 L424.16 153.29 L424.89 151.79 L424.10 150.90 L424.10 150.90 L423.68 150.24 L422.05 150.56 L421.55 149.16 L423.01 148.38 L422.90 147.20 L422.90 147.20 L422.95 146.41 L421.44 145.72 L421.85 144.29 L423.50 144.52 L424.10 143.50 L424.10 143.50 L424.61 142.89 L423.79 141.44 L424.97 140.53 L426.16 141.68 L427.25 141.21 L427.25 141.21 L428.02 141.01 L428.21 139.36 L429.70 139.32 L429.99 140.95 L431.15 141.21 L431.15 141.21 L431.88 141.50 L433.01 140.28 L434.24 141.11 L433.51 142.61 L434.30 143.50 L434.30 143.50 L434.72 144.16 L436.35 143.84 L436.85 145.24 L435.39 146.02 L435.50 147.20Z" fill="#f4f4f6" fill-opacity=".55" stroke="#111" stroke-width="1"/><circle cx="429.2" cy="147.2" r="4.1" fill="#fff" stroke="#111" stroke-width="1.1"/>
<rect x="441.6" y="138.2" width="21.5" height="3.8" fill="#d6d6d6" stroke="#111" stroke-width="1.2"/>
<path d="M467.10 147.20 L467.05 147.99 L468.56 148.68 L468.15 150.11 L466.50 149.88 L465.90 150.90 L465.90 150.90 L465.39 151.51 L466.21 152.96 L465.03 153.87 L463.84 152.72 L462.75 153.19 L462.75 153.19 L461.98 153.39 L461.79 155.04 L460.30 155.08 L460.01 153.45 L458.85 153.19 L458.85 153.19 L458.12 152.90 L456.99 154.12 L455.76 153.29 L456.49 151.79 L455.70 150.90 L455.70 150.90 L455.28 150.24 L453.65 150.56 L453.15 149.16 L454.61 148.38 L454.50 147.20 L454.50 147.20 L454.55 146.41 L453.04 145.72 L453.45 144.29 L455.10 144.52 L455.70 143.50 L455.70 143.50 L456.21 142.89 L455.39 141.44 L456.57 140.53 L457.76 141.68 L458.85 141.21 L458.85 141.21 L459.62 141.01 L459.81 139.36 L461.30 139.32 L461.59 140.95 L462.75 141.21 L462.75 141.21 L463.48 141.50 L464.61 140.28 L465.84 141.11 L465.11 142.61 L465.90 143.50 L465.90 143.50 L466.32 144.16 L467.95 143.84 L468.45 145.24 L466.99 146.02 L467.10 147.20Z" fill="#f4f4f6" fill-opacity=".55" stroke="#111" stroke-width="1"/><circle cx="460.8" cy="147.2" r="4.1" fill="#fff" stroke="#111" stroke-width="1.1"/>
<circle cx="485" cy="137.8" r="7.3" fill="#d4d4d4" stroke="#111" stroke-width="1.3"/>
<rect x="483.9" y="139.8" width="2.2" height="12.5" fill="#111"/>
<rect x="479" y="151.4" width="12" height="1.6" fill="#111"/>
<path d="M498.90 147.20 L498.85 147.99 L500.36 148.68 L499.95 150.11 L498.30 149.88 L497.70 150.90 L497.70 150.90 L497.19 151.51 L498.01 152.96 L496.83 153.87 L495.64 152.72 L494.55 153.19 L494.55 153.19 L493.78 153.39 L493.59 155.04 L492.10 155.08 L491.81 153.45 L490.65 153.19 L490.65 153.19 L489.92 152.90 L488.79 154.12 L487.56 153.29 L488.29 151.79 L487.50 150.90 L487.50 150.90 L487.08 150.24 L485.45 150.56 L484.95 149.16 L486.41 148.38 L486.30 147.20 L486.30 147.20 L486.35 146.41 L484.84 145.72 L485.25 144.29 L486.90 144.52 L487.50 143.50 L487.50 143.50 L488.01 142.89 L487.19 141.44 L488.37 140.53 L489.56 141.68 L490.65 141.21 L490.65 141.21 L491.42 141.01 L491.61 139.36 L493.10 139.32 L493.39 140.95 L494.55 141.21 L494.55 141.21 L495.28 141.50 L496.41 140.28 L497.64 141.11 L496.91 142.61 L497.70 143.50 L497.70 143.50 L498.12 144.16 L499.75 143.84 L500.25 145.24 L498.79 146.02 L498.90 147.20Z" fill="#f4f4f6" fill-opacity=".55" stroke="#111" stroke-width="1"/><circle cx="492.6" cy="147.2" r="4.1" fill="#fff" stroke="#111" stroke-width="1.1"/>
<circle cx="514.5" cy="137.8" r="7.3" fill="#d4d4d4" stroke="#111" stroke-width="1.3"/>
<rect x="513.4" y="139.8" width="2.2" height="12.5" fill="#111"/>
<rect x="508.5" y="151.4" width="12" height="1.6" fill="#111"/>
<path d="M530.70 147.20 L530.65 147.99 L532.16 148.68 L531.75 150.11 L530.10 149.88 L529.50 150.90 L529.50 150.90 L528.99 151.51 L529.81 152.96 L528.63 153.87 L527.44 152.72 L526.35 153.19 L526.35 153.19 L525.58 153.39 L525.39 155.04 L523.90 155.08 L523.61 153.45 L522.45 153.19 L522.45 153.19 L521.72 152.90 L520.59 154.12 L519.36 153.29 L520.09 151.79 L519.30 150.90 L519.30 150.90 L518.88 150.24 L517.25 150.56 L516.75 149.16 L518.21 148.38 L518.10 147.20 L518.10 147.20 L518.15 146.41 L516.64 145.72 L517.05 144.29 L518.70 144.52 L519.30 143.50 L519.30 143.50 L519.81 142.89 L518.99 141.44 L520.17 140.53 L521.36 141.68 L522.45 141.21 L522.45 141.21 L523.22 141.01 L523.41 139.36 L524.90 139.32 L525.19 140.95 L526.35 141.21 L526.35 141.21 L527.08 141.50 L528.21 140.28 L529.44 141.11 L528.71 142.61 L529.50 143.50 L529.50 143.50 L529.92 144.16 L531.55 143.84 L532.05 145.24 L530.59 146.02 L530.70 147.20Z" fill="#f4f4f6" fill-opacity=".55" stroke="#111" stroke-width="1"/><circle cx="524.4" cy="147.2" r="4.1" fill="#fff" stroke="#111" stroke-width="1.1"/>
<text x="517.2" y="151.4" font-family="Liberation Sans" font-weight="bold" font-size="8.6" textLength="9" lengthAdjust="spacingAndGlyphs" fill="#111">3D</text>
<path d="M548.50 134.50 L548.50 147.50" stroke="#111" stroke-width="2.8"/><path d="M542.87 137.75 L554.13 144.25" stroke="#111" stroke-width="2.8"/><path d="M554.13 137.75 L542.87 144.25" stroke="#111" stroke-width="2.8"/>
<path d="M561.70 147.00 L561.65 147.79 L563.16 148.48 L562.75 149.91 L561.10 149.68 L560.50 150.70 L560.50 150.70 L559.99 151.31 L560.81 152.76 L559.63 153.67 L558.44 152.52 L557.35 152.99 L557.35 152.99 L556.58 153.19 L556.39 154.84 L554.90 154.88 L554.61 153.25 L553.45 152.99 L553.45 152.99 L552.72 152.70 L551.59 153.92 L550.36 153.09 L551.09 151.59 L550.30 150.70 L550.30 150.70 L549.88 150.04 L548.25 150.36 L547.75 148.96 L549.21 148.18 L549.10 147.00 L549.10 147.00 L549.15 146.21 L547.64 145.52 L548.05 144.09 L549.70 144.32 L550.30 143.30 L550.30 143.30 L550.81 142.69 L549.99 141.24 L551.17 140.33 L552.36 141.48 L553.45 141.01 L553.45 141.01 L554.22 140.81 L554.41 139.16 L555.90 139.12 L556.19 140.75 L557.35 141.01 L557.35 141.01 L558.08 141.30 L559.21 140.08 L560.44 140.91 L559.71 142.41 L560.50 143.30 L560.50 143.30 L560.92 143.96 L562.55 143.64 L563.05 145.04 L561.59 145.82 L561.70 147.00Z" fill="#f4f4f6" fill-opacity=".55" stroke="#111" stroke-width="1"/><circle cx="555.4" cy="147" r="4.1" fill="#fff" stroke="#111" stroke-width="1.1"/>
<rect x="568.3" y="131" width="1.6" height="20" fill="#a4a4a8"/>
<path d="M576.8 148 L587.2 133.6 H597.6 L586.6 148 Z" fill="#fff" stroke="#111" stroke-width="1.6" stroke-linejoin="round"/>
<path d="M580.8 142.6 L587.2 133.6 H597.6 L590.8 142.6 Z" fill="#111" stroke="#111" stroke-width="1.4" stroke-linejoin="round"/>
<circle cx="619.3" cy="131.9" r="3" fill="#111"/>
<path d="M613.8 138.6 H621.6 L618.4 149.2 Q618.1 150.4 620.6 149.3 L620.9 150.3 Q616.2 153 614.3 152.4 Q612.6 151.8 613.2 149.5 L615.9 141 H613.5 Z" fill="#111"/>
<circle cx="646.1" cy="136" r="10" fill="none" stroke="#111" stroke-width="2.2"/>
<path d="M646.1 130.6 V141.4 M640.7 136 H651.5" stroke="#111" stroke-width="2.2"/>
<path d="M656.5 147.3 L663.5 154.3" stroke="#111" stroke-width="7" stroke-linecap="round"/>
<path d="M656.6 147.4 L663.4 154.2" stroke="#fff" stroke-width="3" stroke-linecap="round"/>
<path d="M668 141 Q683 123 698.3 141 Q683 159 668 141 Z" fill="#fff" stroke="#111" stroke-width="2" stroke-linejoin="round"/>
<circle cx="683" cy="141" r="6.4" fill="none" stroke="#111" stroke-width="2.1"/>
<rect x="702.3" y="131" width="1.6" height="20" fill="#a4a4a8"/>
<rect x="705.6" y="125" width="30.9" height="31.5" rx="6" fill="#1b1b1b"/>
<text x="709.2" y="145.2" font-family="Liberation Sans" font-weight="bold" font-size="10.2" textLength="23" lengthAdjust="spacingAndGlyphs" fill="#fff">INX</text>
<rect x="104.5" y="93.5" width="640.5" height="74.6" fill="none" stroke="#ff0000" stroke-width="3"/>
</svg>
<div id="tray" class="a">
 <div class="a" style="left:5px;top:0;width:315px;height:1038px;background:#f0f0f5"></div>
 <div class="a" style="left:5px;top:0;width:315px;height:27px;background:linear-gradient(#98b2d1,#b9d1eb);border-top:1px solid #a8acb4"></div>
 <div class="a" style="left:11px;top:7px;font-size:13px;font-weight:bold;color:#3a3a48">Default Tray</div>
 <svg class="a" style="left:286px;top:8px" width="30" height="14"><rect x="1.5" y="1.5" width="10" height="10" rx="1" fill="none" stroke="#555" stroke-width="1"/><path d="M4 3.5 H9 M6.5 3.5 V10 M4.5 7 H8.5" stroke="#444" stroke-width="1.2"/><rect x="19.5" y="1.5" width="10" height="10" rx="1" fill="none" stroke="#555" stroke-width="1"/><path d="M22 4 L27 9 M27 4 L22 9" stroke="#444" stroke-width="1"/></svg>
 <div class="a" style="left:5px;top:28.5px;width:314px;height:1009px;border:1px solid #a8a8ae;border-top:1px solid #c0c0c6;background:#f3f6fb;box-shadow:inset 1px 0 #fff"></div>
 <div class="row" style="left:7px;top:31px;width:310px;height:26px">
   <svg class="chev" style="left:6px;top:9px" width="14" height="9"><path d="M1 1 L7 7 L13 1" fill="none" stroke="#555" stroke-width="1.1"/></svg>
   <div class="lbl">Entity Info</div>
   <div class="xb" style="left:288px;top:2.5px"><svg width="18" height="18" style="position:absolute;left:0;top:0"><path d="M5 5 L13 13 M13 5 L5 13" stroke="#444" stroke-width="1"/></svg></div>
 </div>
 <div class="a" style="left:16px;top:68px;font-size:12.6px;font-weight:bold;color:#343442">No Selection</div>
 <div class="a" style="left:16px;top:89px;width:293px;height:2px;background:#dcdde3"></div>
 <div class="a" style="left:1.8px;top:511px;width:1px;height:19px;border-left:1px dotted #9a9aa0"></div>
 <div class="row" style="left:7px;top:288px;width:311px;height:26px">
   <svg class="chev" style="left:8px;top:7px" width="9" height="14"><path d="M1 1 L7 7 L1 13" fill="none" stroke="#555" stroke-width="1.1"/></svg>
   <div class="lbl">Materials</div>
   <div class="xb" style="left:288px;top:3px"><svg width="18" height="18" style="position:absolute;left:0;top:0"><path d="M5 5 L13 13 M13 5 L5 13" stroke="#444" stroke-width="1"/></svg></div>
 </div>
 <div class="row" style="left:7px;top:315px;width:311px;height:26px">
   <svg class="chev" style="left:8px;top:7px" width="9" height="14"><path d="M1 1 L7 7 L1 13" fill="none" stroke="#555" stroke-width="1.1"/></svg>
   <div class="lbl">Components</div>
   <div class="xb" style="left:288px;top:3px"><svg width="18" height="18" style="position:absolute;left:0;top:0"><path d="M5 5 L13 13 M13 5 L5 13" stroke="#444" stroke-width="1"/></svg></div>
 </div>
 <div class="row" style="left:7px;top:342px;width:311px;height:26px">
   <svg class="chev" style="left:8px;top:7px" width="9" height="14"><path d="M1 1 L7 7 L1 13" fill="none" stroke="#555" stroke-width="1.1"/></svg>
   <div class="lbl">Styles</div>
   <div class="xb" style="left:288px;top:3px"><svg width="18" height="18" style="position:absolute;left:0;top:0"><path d="M5 5 L13 13 M13 5 L5 13" stroke="#444" stroke-width="1"/></svg></div>
 </div>
 <div class="row" style="left:7px;top:369px;width:311px;height:26px">
   <svg class="chev" style="left:8px;top:7px" width="9" height="14"><path d="M1 1 L7 7 L1 13" fill="none" stroke="#555" stroke-width="1.1"/></svg>
   <div class="lbl">Tags</div>
   <div class="xb" style="left:288px;top:3px"><svg width="18" height="18" style="position:absolute;left:0;top:0"><path d="M5 5 L13 13 M13 5 L5 13" stroke="#444" stroke-width="1"/></svg></div>
 </div>
 <div class="row" style="left:7px;top:396px;width:311px;height:26px">
   <svg class="chev" style="left:8px;top:7px" width="9" height="14"><path d="M1 1 L7 7 L1 13" fill="none" stroke="#555" stroke-width="1.1"/></svg>
   <div class="lbl">Shadows</div>
   <div class="xb" style="left:288px;top:3px"><svg width="18" height="18" style="position:absolute;left:0;top:0"><path d="M5 5 L13 13 M13 5 L5 13" stroke="#444" stroke-width="1"/></svg></div>
 </div>
 <div class="row" style="left:7px;top:423px;width:311px;height:26px">
   <svg class="chev" style="left:8px;top:7px" width="9" height="14"><path d="M1 1 L7 7 L1 13" fill="none" stroke="#555" stroke-width="1.1"/></svg>
   <div class="lbl">Scenes</div>
   <div class="xb" style="left:288px;top:3px"><svg width="18" height="18" style="position:absolute;left:0;top:0"><path d="M5 5 L13 13 M13 5 L5 13" stroke="#444" stroke-width="1"/></svg></div>
 </div>
 <div class="row" style="left:7px;top:450px;width:311px;height:26px">
   <svg class="chev" style="left:8px;top:7px" width="9" height="14"><path d="M1 1 L7 7 L1 13" fill="none" stroke="#555" stroke-width="1.1"/></svg>
   <div class="lbl">Instructor</div>
   <div class="xb" style="left:288px;top:3px"><svg width="18" height="18" style="position:absolute;left:0;top:0"><path d="M5 5 L13 13 M13 5 L5 13" stroke="#444" stroke-width="1"/></svg></div>
 </div>
</div>

<div id="status" class="a">
 <svg class="a" style="left:7px;top:8px" width="50" height="17"><circle cx="8.8" cy="5.9" r="6.8" transform="translate(0 2)" fill="none" stroke="#a8a8ae" stroke-width="1.1"/><path d="M8.8 3.4 Q5.9 3.4 5.9 6.4 Q5.9 8.2 7.4 10 L8.8 12.4 L10.2 10 Q11.7 8.2 11.7 6.4 Q11.7 3.4 8.8 3.4 Z" fill="#a0a0a6"/><circle cx="8.8" cy="6.3" r="1.2" fill="#f0f0f5"/><circle cx="36.7" cy="7.9" r="6.8" fill="none" stroke="#111" stroke-width="1.4"/><circle cx="36.7" cy="4.5" r="1.1" fill="#111"/><path d="M35.2 6.2 H38.2 Q39 7 39 8 Q38.2 9.2 37.9 9.5 V12 H35.5 V9.5 Q34.4 9 34.4 8 Q34.4 7 35.2 6.2 Z" fill="#111"/></svg>
 <div class="a" style="left:64px;top:5px;width:2px;height:23px;background:#dedee6"></div>
 <div class="a" style="left:71px;top:9px;font-size:13px;letter-spacing:.05px;color:#4a4a50">Click or drag to select objects. Shift = Add/Subtract. Ctrl = Add. Shift + Ctrl = Subtract.</div>
 <div class="a" style="left:1701px;top:5px;width:1px;height:23px;background:#dcdce2"></div>
 <div class="a" style="left:1719.5px;top:3.5px;width:199px;height:26px;border:1px solid #a9a9b0;border-radius:2px;background:#f0f0f5"></div>
</div>
</body></html>
